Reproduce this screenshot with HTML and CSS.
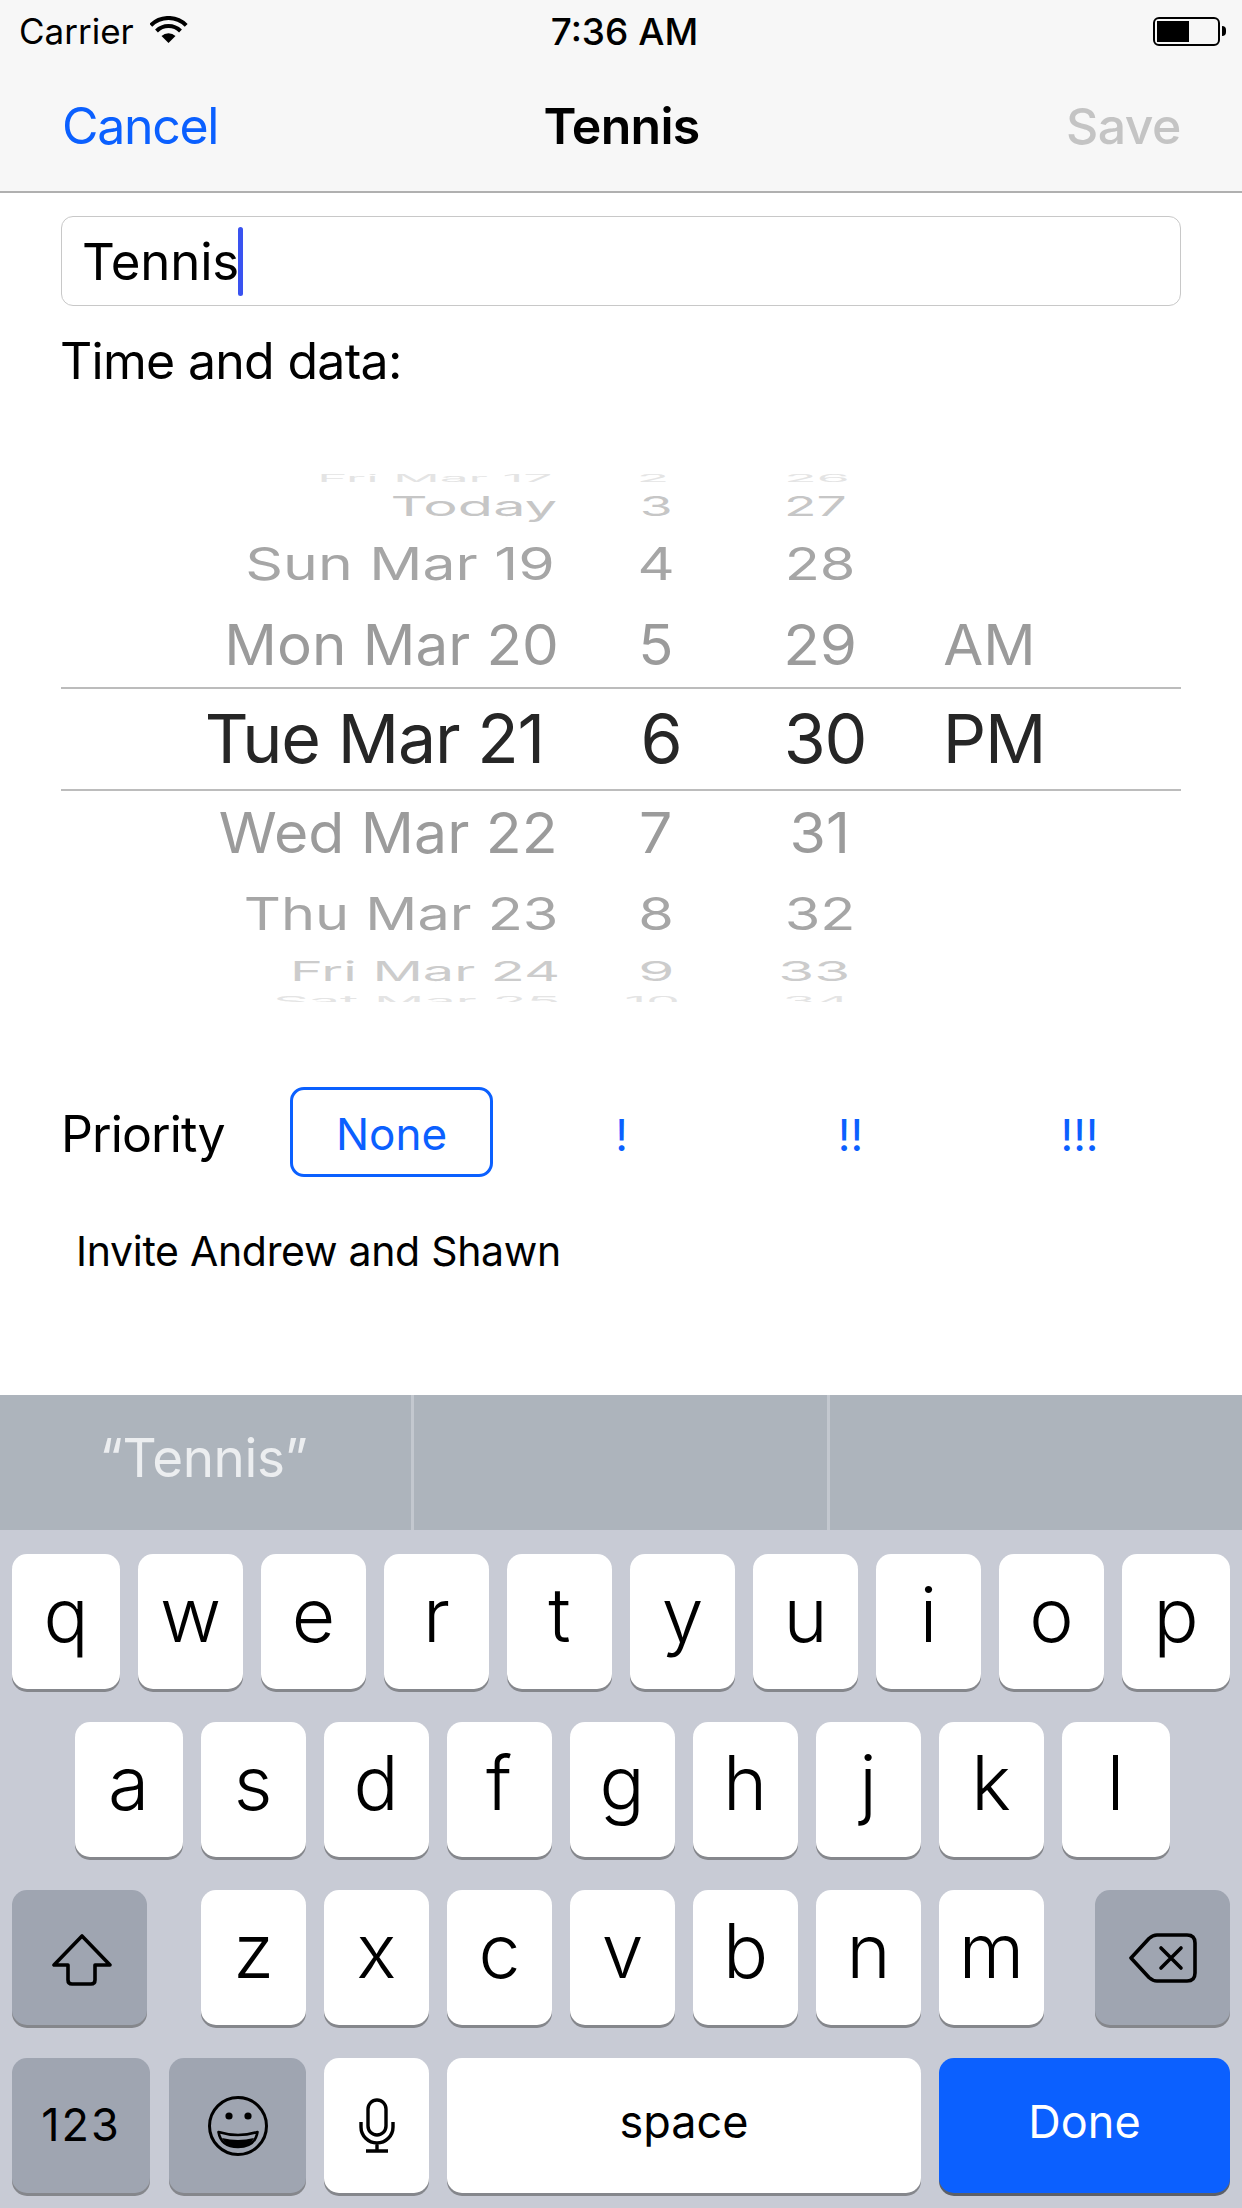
FILE: index.html
```html
<!DOCTYPE html>
<html>
<head>
<meta charset="utf-8">
<title>Tennis</title>
<link rel="stylesheet" href="styles.css">
</head>
<body>

<div class="app">
    <header class="topbar">
        <div class="status">
            <div class="status-left">
                <span>Carrier</span>
                <svg class="wifi" width="38" height="28" viewBox="0 0 38 28">
                    <path d="M0.8 9.3A25 25 0 0 1 36.2 9.3" fill="none" stroke="#000" stroke-width="4"/>
                    <path d="M6.5 15A17 17 0 0 1 30.5 15" fill="none" stroke="#000" stroke-width="4"/>
                    <path d="M18.5 27L11.5 20A10 10 0 0 1 25.5 20Z" fill="#000"/>
                </svg>
            </div>
            <div class="status-time">7:36 AM</div>
            <div class="status-right">
                <div class="battery"><div class="battery-fill"></div></div>
                <div class="battery-nub"></div>
            </div>
        </div>
        <nav class="nav">
            <div class="nav-cancel">Cancel</div>
            <div class="nav-title">Tennis</div>
            <div class="nav-save">Save</div>
        </nav>
    </header>

    <main class="content">
        <div class="title-input">Tennis<span class="caret"></span></div>
        <p class="date-label">Time and data:</p>

        <div class="picker">
            <div class="pick-row edge-top">
                <span class="date"><b>Fri Mar 17</b></span><span class="hour"><b>2</b></span><span class="minute"><b>26</b></span><span></span>
            </div>
            <div class="pick-row far-top">
                <span class="date"><b>Today</b></span><span class="hour"><b>3</b></span><span class="minute"><b>27</b></span><span></span>
            </div>
            <div class="pick-row mid-top">
                <span class="date"><b>Sun Mar 19</b></span><span class="hour"><b>4</b></span><span class="minute"><b>28</b></span><span></span>
            </div>
            <div class="pick-row near-top">
                <span class="date"><b>Mon Mar 20</b></span><span class="hour"><b>5</b></span><span class="minute"><b>29</b></span><span class="ampm"><b>AM</b></span>
            </div>
            <div class="pick-row selected">
                <span class="date"><b>Tue Mar 21</b></span><span class="hour"><b>6</b></span><span class="minute"><b>30</b></span><span class="ampm"><b>PM</b></span>
            </div>
            <div class="pick-row near-bottom">
                <span class="date"><b>Wed Mar 22</b></span><span class="hour"><b>7</b></span><span class="minute"><b>31</b></span><span></span>
            </div>
            <div class="pick-row mid-bottom">
                <span class="date"><b>Thu Mar 23</b></span><span class="hour"><b>8</b></span><span class="minute"><b>32</b></span><span></span>
            </div>
            <div class="pick-row far-bottom">
                <span class="date"><b>Fri Mar 24</b></span><span class="hour"><b>9</b></span><span class="minute"><b>33</b></span><span></span>
            </div>
            <div class="pick-row edge-bottom">
                <span class="date"><b>Sat Mar 25</b></span><span class="hour"><b>10</b></span><span class="minute"><b>34</b></span><span></span>
            </div>
        </div>

        <div class="priority">
            <div class="priority-label">Priority</div>
            <div class="segments">
                <div class="segment segment-on">None</div>
                <div class="segment">!</div>
                <div class="segment">!!</div>
                <div class="segment">!!!</div>
            </div>
        </div>

        <p class="notes">Invite Andrew and Shawn</p>
    </main>

    <section class="suggestions">
        <div class="suggestion">“Tennis”</div>
        <div class="suggestion"></div>
        <div class="suggestion"></div>
    </section>

    <section class="keyboard">
        <div class="key-row">
            <div class="key wide">q</div><div class="key">w</div><div class="key">e</div><div class="key">r</div><div class="key">t</div><div class="key">y</div><div class="key">u</div><div class="key">i</div><div class="key">o</div><div class="key wide">p</div>
        </div>
        <div class="key-row home-row">
            <div class="key wide">a</div><div class="key">s</div><div class="key">d</div><div class="key">f</div><div class="key">g</div><div class="key">h</div><div class="key">j</div><div class="key">k</div><div class="key wide">l</div>
        </div>
        <div class="key-row">
            <div class="key special shift">
                <svg width="60" height="54" viewBox="0 0 60 54">
                    <path d="M30 2L2 31H16V46Q16 50 20 50H39Q43 50 43 46V31H58Z" fill="none" stroke="#000" stroke-width="3.6" stroke-linejoin="round"/>
                </svg>
            </div>
            <div class="key">z</div><div class="key">x</div><div class="key">c</div><div class="key">v</div><div class="key">b</div><div class="key">n</div><div class="key">m</div>
            <div class="key special delete">
                <svg width="68" height="50" viewBox="0 0 68 50">
                    <path d="M2 25L20 5.5Q24 2 28 2H58Q66 2 66 10V40Q66 48 58 48H28Q24 48 20 44.5Z" fill="none" stroke="#000" stroke-width="3.6" stroke-linejoin="round"/>
                    <path d="M32 15L52 35M52 15L32 35" fill="none" stroke="#000" stroke-width="3.6" stroke-linecap="round"/>
                </svg>
            </div>
        </div>
        <div class="key-row">
            <div class="key special small-text numbers">123</div>
            <div class="key special emoji">
                <svg width="60" height="60" viewBox="0 0 60 60">
                    <circle cx="30" cy="30" r="28.5" fill="none" stroke="#000" stroke-width="3"/>
                    <circle cx="21" cy="20" r="3.6"/>
                    <circle cx="40" cy="20" r="3.6"/>
                    <path d="M10.5 36Q30 42 49.5 36Q47 51 30 51Q13 51 10.5 36Z" fill="none" stroke="#000" stroke-width="2.6" stroke-linejoin="round"/>
                    <path d="M14 42Q30 46 46 42Q42 51 30 51Q18 51 14 42Z"/>
                </svg>
            </div>
            <div class="key mic">
                <svg width="36" height="56" viewBox="0 0 36 56">
                    <rect x="9" y="2" width="18" height="35" rx="9" fill="none" stroke="#000" stroke-width="3.4"/>
                    <path d="M2 24V29A16 16 0 0 0 34 29V24M18 45V53M7 53H29" fill="none" stroke="#000" stroke-width="3.4"/>
                </svg>
            </div>
            <div class="key small-text space">space</div>
            <div class="key small-text done">Done</div>
        </div>
    </section>
</div>

</body>
</html>
```

FILE: styles.css
```css
* {
    box-sizing: border-box;
}

body {
    margin: 0;
    font-family: Inter, "Liberation Sans", sans-serif;
    color: #000;
    background-color: #fff;
}

.app {
    display: flex;
    flex-direction: column;
    width: 1242px;
    height: 2208px;
    overflow: hidden;
}

/* status bar and nav */

.topbar {
    height: 193px;
    background-color: #f7f7f7;
    border-bottom: 2px solid #b0b0b0;
}

.status {
    display: grid;
    grid-template-columns: 1fr auto 1fr;
    align-items: center;
    height: 60px;
    padding: 2px 20px 0 19px;
    font-size: 35px;
}

.status-left {
    display: flex;
    align-items: center;
    gap: 16px;
}

.wifi {
    margin-top: -2px;
}

.status-time {
    margin-left: 8px;
    font-size: 37px;
    font-weight: 500;
}

.status-right {
    display: flex;
    align-items: center;
    justify-content: flex-end;
    gap: 2px;
}

.battery {
    width: 67px;
    height: 29px;
    padding: 2px;
    border: 2px solid #000;
    border-radius: 6px;
}

.battery-fill {
    width: 32px;
    height: 100%;
    background-color: #000;
}

.battery-nub {
    width: 4px;
    height: 10px;
    margin-right: -4px;
    background-color: #000;
    border-radius: 0 5px 5px 0;
}

.nav {
    display: grid;
    grid-template-columns: 1fr auto 1fr;
    align-items: center;
    height: 131px;
    padding: 0 61px 0 62px;
    font-size: 50px;
}

.nav-cancel {
    color: #0b60ff;
    letter-spacing: -1.3px;
}

.nav-title {
    font-weight: 600;
    letter-spacing: -0.7px;
}

.nav-save {
    text-align: right;
    color: #c4c4c4;
    font-weight: 500;
    letter-spacing: -0.5px;
}

/* form */

.content {
    flex: 1;
    padding: 23px 61px 0;
}

.title-input {
    display: flex;
    align-items: center;
    height: 90px;
    padding-left: 20px;
    font-size: 51px;
    letter-spacing: -0.2px;
    border: 1.5px solid #c8c8c8;
    border-radius: 12px;
}

.caret {
    width: 5px;
    height: 69px;
    margin-left: -1px;
    background-color: #3a53f0;
    border-radius: 3px;
}

.date-label {
    height: 70px;
    margin: 17px 0 0 -1px;
    padding-top: 3px;
    font-size: 50px;
    line-height: 70px;
    letter-spacing: -0.7px;
}

.picker {
    height: 528px;
    margin-top: 81px;
    overflow: hidden;
}

.pick-row {
    display: grid;
    grid-template-columns: 497px 196px 132px 206px 89px;
    grid-template-rows: 100%;
    align-items: center;
    color: #9b9b9b;
    font-size: 62px;
    line-height: 1;
}

.pick-row span {
    display: flex;
    justify-content: center;
    white-space: nowrap;
}

.pick-row .date {
    justify-content: flex-end;
}

.pick-row b {
    display: block;
    font-weight: 400;
    transform-origin: center;
}

.pick-row .date b {
    transform-origin: right center;
}

.edge-top {
    height: 7px;
    color: #e4e4e4;
}

.edge-top b {
    transform: translateX(-3px) scale(.86, .16);
}

.edge-top .date b {
    transform: translateX(-6px) scale(.83, .16);
}

.far-top {
    height: 50px;
    color: #c6c6c6;
}

.far-top b {
    transform: scale(.86, .44);
}

.far-top .date b {
    transform: translateX(-1px) scale(.93, .44);
}

.far-top .minute b {
    transform: translateX(-5px) scale(.86, .44);
}

.mid-top {
    height: 66px;
    color: #a6a6a6;
}

.mid-top b {
    transform: scale(.93, .72);
}

.mid-top .date b {
    transform: translateX(-3px) scale(.95, .72);
}

.near-top {
    height: 90px;
}

.near-top b {
    transform: translateY(3px) scale(.935, .91);
}

.near-top .date b {
    transform: translate(1px, 3px) scale(.94, .91);
}

.near-top .minute b {
    transform: translateY(3px) scale(.97, .91);
}

.selected {
    height: 104px;
    color: #262626;
    font-size: 68px;
    letter-spacing: -1.2px;
    border-top: 2px solid #bcbcbc;
    border-bottom: 2px solid #bcbcbc;
}

.selected .date b {
    transform: translate(-14px, -1px);
}

.selected .hour b,
.selected .minute b,
.selected .ampm b {
    transform: translate(5px, -1px);
}

.near-bottom {
    height: 82px;
}

.near-bottom b {
    transform: translateY(1px) scale(.95, .91);
}

.mid-bottom {
    height: 82px;
    color: #a6a6a6;
}

.mid-bottom b {
    transform: scale(.93, .72);
}

.far-bottom {
    height: 32px;
    color: #cccccc;
}

.far-bottom b {
    transform: scale(.94, .44);
}

.far-bottom .date b {
    transform: translateX(2px) scale(.9, .44);
}

.far-bottom .minute b {
    transform: translateX(-6px) scale(.94, .44);
}

.edge-bottom {
    height: 15px;
    color: #e4e4e4;
}

.edge-bottom b {
    transform: translate(-4px, 6px) scale(.86, .22);
}

.edge-bottom .date b {
    transform: translate(2px, 6px) scale(.9, .22);
}

.priority {
    display: flex;
    align-items: center;
    height: 90px;
    margin-top: 88px;
}

.priority-label {
    flex: none;
    width: 229px;
    margin-top: -2px;
    font-size: 50px;
    letter-spacing: -0.9px;
}

.segments {
    display: flex;
    color: #0b60ff;
    font-size: 44px;
}

.segment {
    flex: none;
    width: 229px;
    line-height: 96px;
    text-align: center;
}

.segment-on {
    width: 203px;
    height: 90px;
    margin-right: 14px;
    line-height: 88px;
    border: 3px solid #0b60ff;
    border-radius: 14px;
}

.notes {
    margin: 43px 0 0 15px;
    font-size: 41px;
    line-height: 56px;
    letter-spacing: -0.3px;
}

/* keyboard */

.suggestions {
    display: grid;
    grid-template-columns: 414px 416px 1fr;
    height: 135px;
    background-color: #adb4bc;
}

.suggestion {
    display: flex;
    align-items: center;
    justify-content: center;
    padding: 0 4px 10px 0;
    color: #eceef0;
    font-size: 53px;
    letter-spacing: -0.4px;
    border-right: 3px solid #c3c8cf;
}

.suggestion:last-child {
    border-right: 0;
}

.keyboard {
    display: flex;
    flex-direction: column;
    gap: 33px;
    height: 678px;
    padding: 24px 12px 0;
    background-color: #c8cbd5;
}

.key-row {
    display: flex;
    justify-content: center;
    gap: 18px;
}

.home-row {
    padding-left: 2px;
}

.key {
    display: flex;
    align-items: center;
    justify-content: center;
    width: 105px;
    height: 135px;
    padding-bottom: 15px;
    font-size: 75px;
    font-weight: 300;
    background-color: #fff;
    border-radius: 15px;
    box-shadow: 0 3px 0 #85878c;
}

.key.wide {
    width: 108px;
}

.key.special {
    background-color: #9fa5b1;
}

.shift,
.delete {
    width: 135px;
    padding-bottom: 0;
}

.key.shift {
    margin-right: 36px;
    padding: 6px 0 0 4px;
}

.delete {
    margin-left: 33px;
}

.key.small-text {
    padding-bottom: 8px;
    font-size: 45px;
    font-weight: 400;
}

.key.numbers {
    width: 138px;
    margin-right: 1px;
    padding-bottom: 2px;
    letter-spacing: 2px;
}

.emoji {
    width: 137px;
    padding-bottom: 0;
}

.mic {
    padding-bottom: 0;
}

.space {
    width: 474px;
}

.done {
    width: 291px;
    color: #fff;
    background-color: #0b60ff;
    box-shadow: 0 3px 0 #5c6068;
}
```
